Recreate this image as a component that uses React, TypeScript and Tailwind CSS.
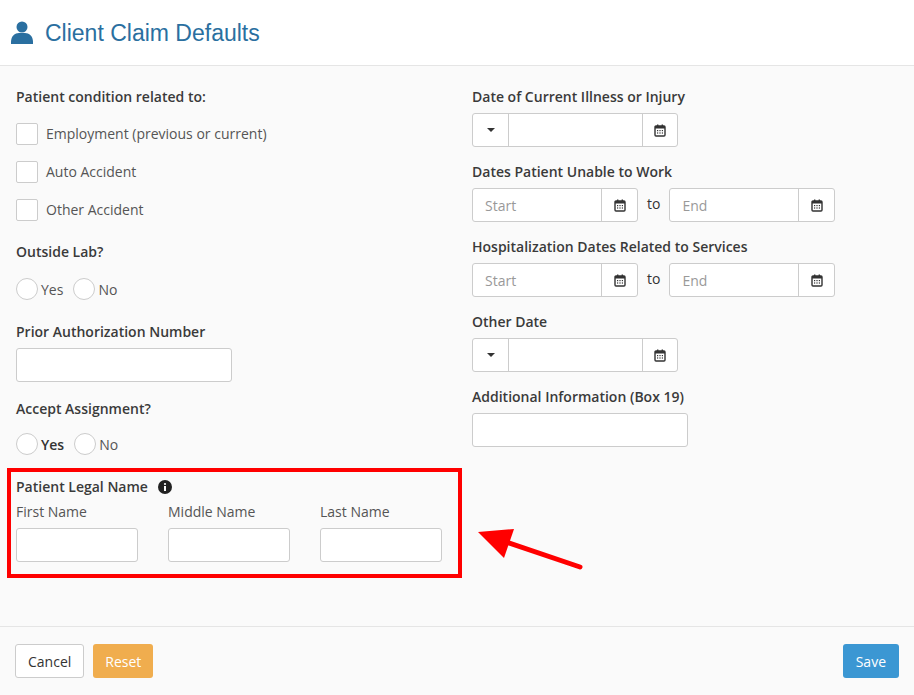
import React from "react";

const Cal = () => (
  <svg width="12" height="13" viewBox="0 0 12 13" fill="none">
    <rect x="1" y="2" width="10" height="10" rx="1" stroke="#333" strokeWidth="1.4" />
    <rect x="1" y="2" width="10" height="2.5" fill="#333" />
    <rect x="3" y="0.5" width="1.4" height="2.5" fill="#333" />
    <rect x="7.6" y="0.5" width="1.4" height="2.5" fill="#333" />
    <g fill="#333">
      <rect x="3" y="6" width="1.2" height="1.2" /><rect x="5.4" y="6" width="1.2" height="1.2" /><rect x="7.8" y="6" width="1.2" height="1.2" />
      <rect x="3" y="8.4" width="1.2" height="1.2" /><rect x="5.4" y="8.4" width="1.2" height="1.2" /><rect x="7.8" y="8.4" width="1.2" height="1.2" />
    </g>
  </svg>
);

const Box = () => <div className="w-[22px] h-[22px] border border-[#ccc] bg-white rounded-[2px]" />;
const Radio = () => <div className="w-[22px] h-[22px] border border-[#ccc] bg-white rounded-full" />;
const Label = ({ children }: { children: React.ReactNode }) => (
  <div className="text-[14px] font-semibold text-[#3a3a3a] leading-[20px]">{children}</div>
);

const DateDrop = () => (
  <div className="flex h-[34px] w-[206px] border border-[#ccc] rounded-[3px] bg-white">
    <div className="w-[36px] border-r border-[#ccc] flex items-center justify-center">
      <div className="w-0 h-0 border-l-[4px] border-r-[4px] border-t-[4px] border-l-transparent border-r-transparent border-t-[#333]" />
    </div>
    <div className="flex-1" />
    <div className="w-[35px] border-l border-[#ccc] flex items-center justify-center"><Cal /></div>
  </div>
);

const DateInp = ({ ph }: { ph: string }) => (
  <div className="flex h-[34px] w-[166px] border border-[#ccc] rounded-[3px] bg-white">
    <div className="flex-1 flex items-center pl-3 text-[14px] text-[#999]">{ph}</div>
    <div className="w-[36px] border-l border-[#ccc] flex items-center justify-center"><Cal /></div>
  </div>
);

const Range = () => (
  <div className="flex items-center">
    <DateInp ph="Start" />
    <span className="mx-[9px] text-[14px] text-[#333] -mt-[4px]">to</span>
    <DateInp ph="End" />
  </div>
);

export default function App() {
  return (
    <div className="relative w-[914px] h-[695px] bg-[#fafafa] flex flex-col" style={{ fontFamily: '"Open Sans", sans-serif' }}>
      <div className="h-[66px] bg-white border-b border-[#e5e5e5] flex items-center pl-[11px]">
        <svg width="22" height="23" viewBox="0 0 22 23"><circle cx="11" cy="6" r="5.5" fill="#2a6fa0" /><path d="M0 21c0-6 4-9 8-9h6c4 0 8 3 8 9v2H0z" fill="#2a6fa0" /></svg>
        <span className="ml-[12px] text-[23px] text-[#2a6fa0] mt-[1px]" style={{ fontFamily: '"Liberation Sans", sans-serif' }}>Client Claim Defaults</span>
      </div>
      <div className="flex-1 flex pt-[21px]">
        <div className="w-[456px] pl-[16px]">
          <Label>Patient condition related to:</Label>
          <div className="mt-[16px] flex flex-col gap-[16px] text-[14px] text-[#555]">
            {["Employment (previous or current)", "Auto Accident", "Other Accident"].map((t) => (
              <div key={t} className="flex items-center gap-[8px] h-[22px]"><Box /><span className="-mt-[2px]">{t}</span></div>
            ))}
          </div>
          <div className="mt-[21px]"><Label>Outside Lab?</Label></div>
          <div className="mt-[16px] flex items-center text-[14px] text-[#555] h-[22px]">
            <Radio /><span className="ml-[3px] mr-[10px]">Yes</span><Radio /><span className="ml-[3px]">No</span>
          </div>
          <div className="mt-[22px]"><Label>Prior Authorization Number</Label></div>
          <div className="mt-[6px] w-[216px] h-[34px] border border-[#ccc] rounded-[3px] bg-white" />
          <div className="mt-[17px]"><Label>Accept Assignment?</Label></div>
          <div className="mt-[14px] flex items-center text-[14px] text-[#333] h-[22px]">
            <Radio /><span className="ml-[3px] mr-[10px] font-semibold">Yes</span><Radio /><span className="ml-[3px] text-[#555]">No</span>
          </div>
          <div className="mt-[13px] -ml-[9px] w-[455px] h-[110px] border-[4px] border-[#f00] pl-[5px] pt-[5px]">
            <div className="flex items-center gap-[10px]"><Label>Patient Legal Name</Label>
              <svg width="14" height="14" viewBox="0 0 14 14"><circle cx="7" cy="7" r="7" fill="#222" /><rect x="6" y="6" width="2" height="5" fill="#fff" /><circle cx="7" cy="4" r="1.1" fill="#fff" /></svg>
            </div>
            <div className="flex gap-[30px] mt-[5px]">
              {["First Name", "Middle Name", "Last Name"].map((t) => (
                <div key={t}>
                  <div className="text-[14px] text-[#555] leading-[20px]">{t}</div>
                  <div className="mt-[6px] w-[122px] h-[34px] border border-[#ccc] rounded-[3px] bg-white" />
                </div>
              ))}
            </div>
          </div>
        </div>
        <div className="pl-[16px]">
          <Label>Date of Current Illness or Injury</Label>
          <div className="mt-[6px]"><DateDrop /></div>
          <div className="mt-[15px]"><Label>Dates Patient Unable to Work</Label></div>
          <div className="mt-[6px]"><Range /></div>
          <div className="mt-[15px]"><Label>Hospitalization Dates Related to Services</Label></div>
          <div className="mt-[6px]"><Range /></div>
          <div className="mt-[15px]"><Label>Other Date</Label></div>
          <div className="mt-[6px]"><DateDrop /></div>
          <div className="mt-[15px]"><Label>Additional Information (Box 19)</Label></div>
          <div className="mt-[6px] w-[216px] h-[34px] border border-[#ccc] rounded-[3px] bg-white" />
        </div>
      </div>
      <div className="h-[69px] border-t border-[#e5e5e5] flex items-center px-[15px] text-[14px]">
        <button className="h-[34px] px-[12px] border border-[#ccc] bg-white rounded-[3px] text-[#333]">Cancel</button>
        <button className="ml-[9px] h-[34px] px-[12px] bg-[#f0ad4e] rounded-[3px] text-white">Reset</button>
        <div className="flex-1" />
        <button className="h-[34px] px-[13px] bg-[#3b97d3] rounded-[3px] text-white">Save</button>
      </div>
      <svg className="absolute left-[476px] top-[528px]" width="110" height="45" viewBox="0 0 110 45">
        <line x1="104" y1="39" x2="30" y2="14" stroke="#f00" strokeWidth="5" strokeLinecap="round" />
        <polygon points="2,4 38,1 28,30" fill="#f00" />
      </svg>
    </div>
  );
}
